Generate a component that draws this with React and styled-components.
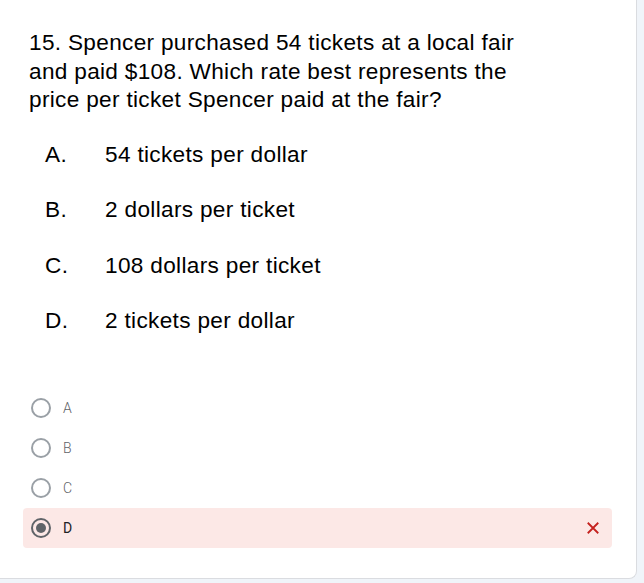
import React from "react";
import styled, { createGlobalStyle } from "styled-components";

const Global = createGlobalStyle`
  html, body { margin: 0; padding: 0; background: #f0f4f9; }
  body { width: 644px; height: 583px; overflow: hidden; }
`;

const Card = styled.div`
  box-sizing: border-box;
  width: 637px;
  height: 579px;
  background: #fff;
  border-right: 1px solid #dadce0;
  border-bottom: 1px solid #dadce0;
  border-bottom-right-radius: 8px;
  padding: 29px 0 0 0;
  display: flex;
  flex-direction: column;
`;

const Question = styled.div`
  font-family: "Liberation Sans", Arial, sans-serif;
  font-size: 22.6px;
  letter-spacing: 0.32px;
  line-height: 28.5px;
  color: #000;
  padding-left: 29px;
  white-space: nowrap;
`;

const Choices = styled.div`
  display: flex;
  flex-direction: column;
  margin-top: 26px;
  gap: 27.5px;
`;

const Choice = styled.div`
  display: flex;
  align-items: center;
  font-family: "Liberation Sans", Arial, sans-serif;
  font-size: 22.6px;
  letter-spacing: 0.33px;
  line-height: 28px;
  color: #000;
`;

const ChoiceLetter = styled.span`
  width: 60px;
  padding-left: 45px;
`;

const Radios = styled.div`
  display: flex;
  flex-direction: column;
  margin-top: 53px;
  padding: 0 24px 0 23px;
`;

const RadioRow = styled.div`
  display: flex;
  align-items: center;
  height: 40px;
  padding: 0 10px 0 8px;
  border-radius: 4px;
  background: ${(p) => (p.$wrong ? "#fce8e6" : "transparent")};
`;

const Circle = styled.span`
  box-sizing: border-box;
  width: 20px;
  height: 20px;
  border-radius: 50%;
  border: 2px solid ${(p) => (p.$checked ? "#5f6368" : "#9aa0a6")};
  display: flex;
  align-items: center;
  justify-content: center;
  &::after {
    content: "";
    display: ${(p) => (p.$checked ? "block" : "none")};
    width: 10px;
    height: 10px;
    border-radius: 50%;
    background: #5f6368;
  }
`;

const Label = styled.span`
  margin-left: 12px;
  font-family: Roboto, "Liberation Sans", Arial, sans-serif;
  font-size: 14px;
  font-weight: ${(p) => (p.$checked ? 400 : 300)};
  color: ${(p) => (p.$checked ? "#202124" : "#5f6368")};
  flex: 1;
`;

const WrongMark = styled.svg`
  width: 18px;
  height: 18px;
`;

const choices = [
  ["A.", "54 tickets per dollar"],
  ["B.", "2 dollars per ticket"],
  ["C.", "108 dollars per ticket"],
  ["D.", "2 tickets per dollar"],
];

export default function App() {
  return (
    <>
      <Global />
      <Card>
        <Question>
          15. Spencer purchased 54 tickets at a local fair
          <br />
          and paid $108. Which rate best represents the
          <br />
          price per ticket Spencer paid at the fair?
        </Question>
        <Choices>
          {choices.map(([l, t]) => (
            <Choice key={l}>
              <ChoiceLetter>{l}</ChoiceLetter>
              <span>{t}</span>
            </Choice>
          ))}
        </Choices>
        <Radios>
          {["A", "B", "C", "D"].map((l) => {
            const checked = l === "D";
            return (
              <RadioRow key={l} $wrong={checked}>
                <Circle $checked={checked} />
                <Label $checked={checked}>{l}</Label>
                {checked && (
                  <WrongMark viewBox="0 0 24 24">
                    <path d="M5 5 L19 19 M19 5 L5 19" stroke="#c5221f" strokeWidth="2.4" fill="none" />
                  </WrongMark>
                )}
              </RadioRow>
            );
          })}
        </Radios>
      </Card>
    </>
  );
}
